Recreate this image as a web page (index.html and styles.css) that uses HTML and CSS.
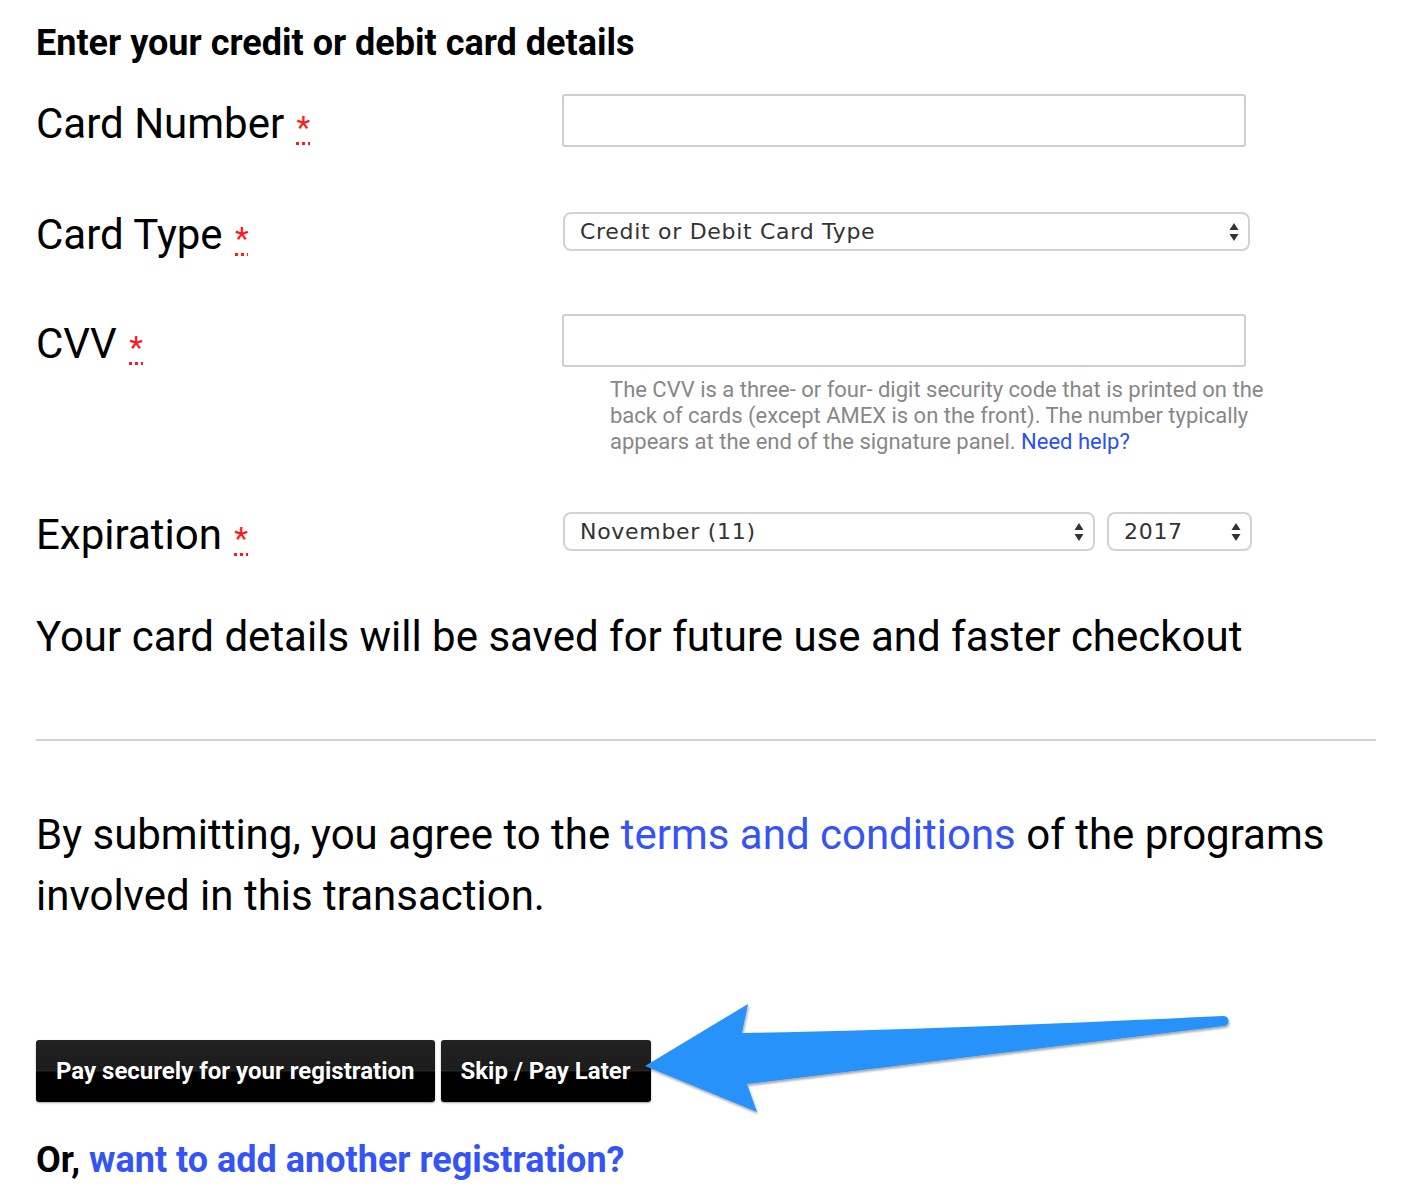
FILE: index.html
```html
<!DOCTYPE html>
<html lang="en">
<head>
<meta charset="utf-8">
<title>Card details</title>
<link rel="stylesheet" href="styles.css">
</head>
<body>
<main class="page">
  <h2 class="title">Enter your credit or debit card details</h2>

  <div class="row row-number">
    <label class="label">Card Number <abbr class="req" title="required">*</abbr></label>
    <div class="control">
      <input class="text-input" type="text">
    </div>
  </div>

  <div class="row row-type">
    <label class="label">Card Type <abbr class="req" title="required">*</abbr></label>
    <div class="control">
      <div class="select select-wide">
        <span class="select-text">Credit or Debit Card Type</span>
        <svg class="spin" width="10" height="20" viewBox="0 0 10 20"><path d="M5 1 L9.5 8 L0.5 8 Z M0.5 12 L9.5 12 L5 19 Z" fill="#333"/></svg>
      </div>
    </div>
  </div>

  <div class="row row-cvv">
    <label class="label">CVV <abbr class="req" title="required">*</abbr></label>
    <div class="control">
      <input class="text-input" type="text">
    </div>
  </div>
  <p class="help">The CVV is a three- or four- digit security code that is printed on the back of cards (except AMEX is on the front). The number typically appears at the end of the signature panel. <a href="#">Need help?</a></p>

  <div class="row row-exp">
    <label class="label">Expiration <abbr class="req" title="required">*</abbr></label>
    <div class="control exp">
      <div class="select select-month">
        <span class="select-text">November (11)</span>
        <svg class="spin" width="10" height="20" viewBox="0 0 10 20"><path d="M5 1 L9.5 8 L0.5 8 Z M0.5 12 L9.5 12 L5 19 Z" fill="#333"/></svg>
      </div>
      <div class="select select-year">
        <span class="select-text">2017</span>
        <svg class="spin" width="10" height="20" viewBox="0 0 10 20"><path d="M5 1 L9.5 8 L0.5 8 Z M0.5 12 L9.5 12 L5 19 Z" fill="#333"/></svg>
      </div>
    </div>
  </div>

  <p class="saved">Your card details will be saved for future use and faster checkout</p>

  <hr class="divider">

  <p class="agree">By submitting, you agree to the <a href="#">terms and conditions</a> of the programs involved in this transaction.</p>

  <div class="buttons">
    <button class="btn">Pay securely for your registration</button>
    <button class="btn">Skip / Pay Later</button>
  </div>

  <p class="another">Or, <a href="#">want to add another registration?</a></p>
</main>

<svg class="arrow" width="1418" height="1204" viewBox="0 0 1418 1204">
  <defs>
    <filter id="sh" x="-5%" y="-20%" width="110%" height="140%">
      <feDropShadow dx="1" dy="2" stdDeviation="1.2" flood-color="#000" flood-opacity="0.35"/>
    </filter>
  </defs>
  <path d="M645 1066 L748 1004 L742 1033 Q930 1030 1223 1016 A5 5 0 0 1 1224 1026 L747 1084 L757 1112 Z" fill="#2892fa" filter="url(#sh)"/>
</svg>
</body>
</html>
```

FILE: styles.css
```css
html, body {
  margin: 0;
  padding: 0;
  background: #fff;
}

body {
  font-family: Roboto, "Liberation Sans", Arial, sans-serif;
  color: #000;
  position: relative;
}

.page {
  width: 1340px;
  padding: 22px 0 0 36px;
}

.title {
  margin: 0;
  font-size: 36px;
  font-weight: 700;
  line-height: 42px;
}

.row {
  display: flex;
  align-items: center;
}

.row-number { margin-top: 30px; }
.row-type { margin-top: 65px; }
.row-cvv { margin-top: 63px; }
.row-exp { margin-top: 57px; }

.label {
  width: 526px;
  flex: none;
  height: 39px;
  font-size: 42px;
  line-height: 46px;
  white-space: nowrap;
}

.req {
  color: #ff1a1a;
  font-size: 32px;
  line-height: 1;
  text-decoration: underline dotted #ff1a1a;
  text-decoration-thickness: 3px;
  text-underline-offset: 4px;
  margin-left: 2px;
}

.control {
  flex: none;
}

.text-input {
  display: block;
  box-sizing: border-box;
  width: 684px;
  height: 53px;
  margin: 0;
  border: 2px solid #cfcfcf;
  border-radius: 3px;
  background: #fff;
}

.select {
  position: relative;
  box-sizing: border-box;
  height: 39px;
  border: 2px solid #d2d2d2;
  border-radius: 8px;
  background: #fff;
  display: flex;
  align-items: center;
  padding-left: 15px;
}

.select-wide { width: 687px; margin-left: 1px; }
.exp { display: flex; gap: 12px; margin-left: 1px; }
.select-month { width: 532px; }
.select-year { width: 145px; }

.select-text {
  font-family: "DejaVu Sans", Verdana, sans-serif;
  font-size: 22px;
  letter-spacing: 0.7px;
  color: #333;
}

.spin {
  position: absolute;
  right: 9px;
  top: 8px;
}

.help {
  margin: 10px 0 0 574px;
  width: 660px;
  font-size: 22px;
  line-height: 26px;
  color: #878787;
}

.help a {
  color: #2a4ff5;
  text-decoration: none;
}

.saved {
  margin: 61px 0 0;
  font-size: 42px;
  line-height: 49px;
}

.divider {
  margin: 78px 0 0;
  height: 2px;
  border: 0;
  background: #d3d3d3;
}

.agree {
  margin: 63px 0 0;
  font-size: 42px;
  line-height: 61px;
  width: 1330px;
}

.agree a, .another a {
  color: #3554f8;
  text-decoration: none;
}

.buttons {
  margin-top: 114px;
  display: flex;
  gap: 6px;
}

.btn {
  height: 62px;
  padding: 0 20px;
  border: 0;
  border-radius: 3px;
  font-family: Roboto, "Liberation Sans", Arial, sans-serif;
  font-size: 24px;
  font-weight: 700;
  color: #fff;
  background: linear-gradient(#222 0, #1c1c1c 48%, #2a2a2a 49%, #000 52%, #000 100%);
  text-shadow: 0 1px 1px #000;
  box-shadow: 0 1px 2px rgba(0, 0, 0, 0.35);
}

.another {
  margin: 37px 0 0;
  font-size: 36px;
  font-weight: 700;
  line-height: 42px;
}

.arrow {
  position: absolute;
  left: 0;
  top: 0;
  pointer-events: none;
}
```
